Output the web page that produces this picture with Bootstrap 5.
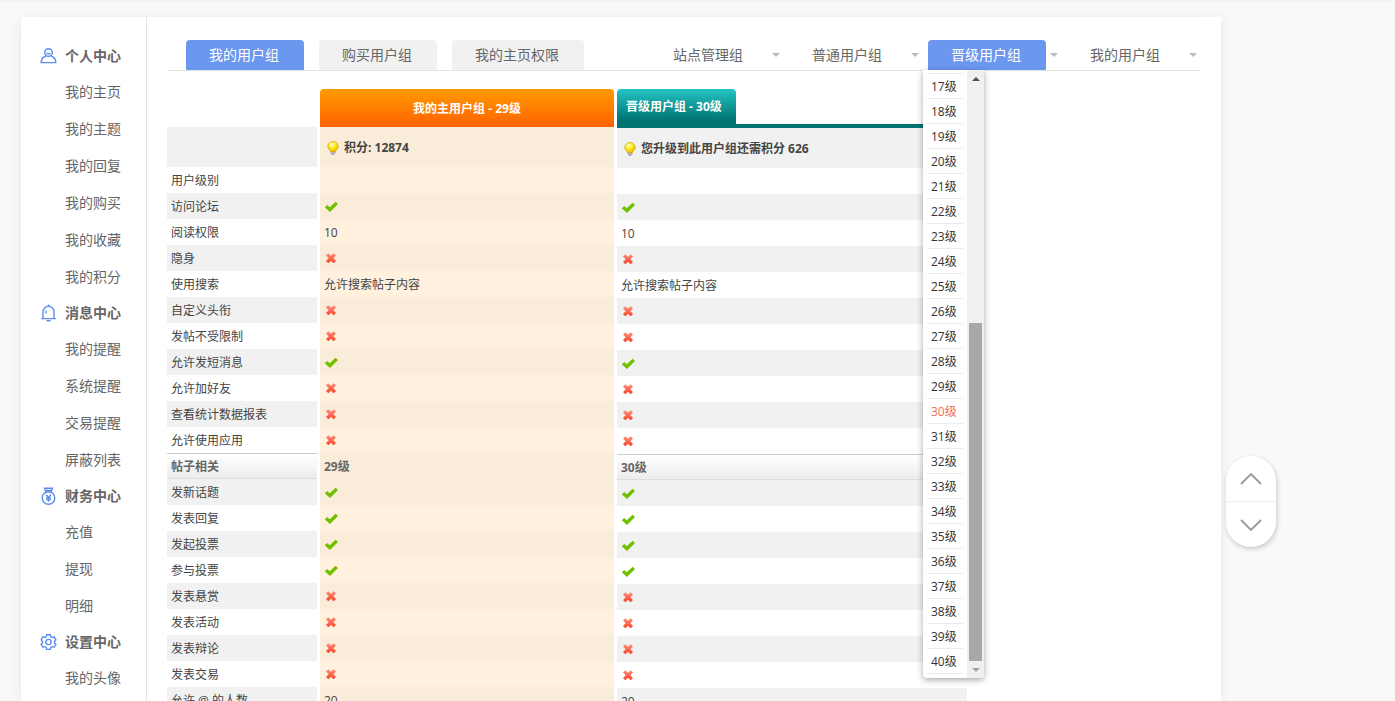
<!DOCTYPE html>
<html lang="zh-CN">
<head>
<meta charset="utf-8">
<meta name="viewport" content="width=device-width, initial-scale=1">
<title>我的用户组</title>
<link href="https://cdn.jsdelivr.net/npm/bootstrap@5.3.0/dist/css/bootstrap.min.css" rel="stylesheet">
<style>
body{font:12px/26px "Open Sans","Noto Sans CJK SC",sans-serif;color:#444;background:linear-gradient(#f2f2f2,#f9f9f9 3px) #f9f9f9}
a{color:inherit;text-decoration:none}
.page{padding:17px 119px 0 21px;gap:5px}
.panel{background:#fff;box-shadow:0 2px 12px rgba(0,0,0,.08);min-width:0}
/* sidebar */
.side{width:126px;flex:none;border-right:1px solid #e3e3e3;padding:21px 0 0 19px;color:#666;font-size:14px}
.side h2{font-size:14px;font-weight:700;line-height:35px;height:35px;margin:0;gap:8px}
.side h2 svg{width:17px;height:18px;flex:none;fill:none;stroke:#5b8def;stroke-width:1.4}
.side li a{display:block;line-height:37px;padding-left:25px}
/* tabs */
.main-col{padding:23px 20px 0;min-width:0}
.tabs{border-bottom:1px solid #e3e3e3;padding-left:19px;font-size:14px;color:#666}
.tab-set{gap:15px}
.group-set{gap:5px}
.tab-link{display:block;height:30px;line-height:30px;padding:0 25px 0 23px;border-radius:4px 4px 0 0;white-space:nowrap}
.tab-set .tab-link{background:#f1f1f1}
.tabs .tab-link.on{background:#6b97ee;color:#fff}
.caret-btn{width:16px;height:30px;border:0;background:none;padding:0;display:flex;align-items:center;justify-content:center}
.caret-btn::before,.arrow::before{content:"";border:4px solid transparent;border-top-color:#bbb;border-bottom:0}
/* level menu */
.levels{top:100%;left:-5px;width:61px;z-index:5;background:#fff;color:#333;font-size:12px;border-radius:0 0 4px 4px;box-shadow:0 2px 6px rgba(0,0,0,.35);overflow:hidden}
.levels ul{width:36px;margin:3px 4px 4px;border-top:1px solid #e5edf2}
.levels li{height:25px;line-height:26px;padding-left:4px;border-bottom:1px solid #e5edf2;white-space:nowrap}
.levels .now{color:#f26c4f}
.scroll-track{width:17px;background:#f0f0f0;padding:0 2px}
.arrow{height:17px;display:flex;align-items:center;justify-content:center}
.arrow::before{border-top-color:#a0a0a0}
.arrow.up::before{border-top:0;border-bottom:4px solid #505050}
.thumb{background:#a8a8a8;height:338px}
/* permission tables */
.sheets{padding-top:18px;gap:3px}
.sheet{border-collapse:separate;border-spacing:0;table-layout:fixed;flex:none}
.sheet td,.sheet tbody th{height:26px;padding:2px 4px 0;line-height:22px;font-weight:400;text-align:left;white-space:nowrap;vertical-align:middle}
.sheet .info td,.sheet .info th{height:40px;font-weight:700}
.sheet .odd>*{background:#f1f1f1}
.sheet .cap>*{font-weight:700;color:#666;line-height:20px;border-top:1px solid #ccc;border-bottom:1px solid #ddd;background:linear-gradient(#fff,#ececec)}
.names{width:150px}.mine{width:294px}.next{width:350px}
.names thead td{height:38px}
.mine thead th{height:38px;padding:2px 0 0;color:#fff;text-align:center;border-radius:4px 4px 0 0;background:linear-gradient(#ff9a00,#ff6200)}
.mine tbody tr>*{background:#fff1de}
.mine .odd>*,.mine .cap>*{background:#f9ecd9}
.mine .cap>*{border:0}
.next thead th{height:39px;padding:0;border-bottom:4px solid #007472;vertical-align:bottom}
.next thead span{display:block;width:119px;height:35px;line-height:35px;padding-left:9px;color:#fff;border-radius:4px 4px 0 0;background:linear-gradient(#24c4c4,#007472 90%);white-space:nowrap}
.mark-ico{width:14px;height:12px;display:block}
.bulb{width:12px;height:14px;margin:0 5px 0 3px;vertical-align:-3px}
/* page jump */
.jump{width:50px;flex:none;margin-bottom:154px;background:#fff;border-radius:25px;box-shadow:1px 2px 5px rgba(0,0,0,.2);overflow:hidden}
.jump button{width:50px;height:45px;border:0;padding:0;background:none;display:flex;align-items:center;justify-content:center}
.jump button+button{border-top:1px solid #eee;height:46px}
.jump svg{width:24px;height:14px;fill:none;stroke:#999;stroke-width:1.8}
</style>
</head>
<body>
<svg class="position-absolute" width="0" height="0" aria-hidden="true">
  <defs>
    <linearGradient id="red" x1="0" y1="0" x2="0" y2="1"><stop stop-color="#ff9080"/><stop offset="1" stop-color="#fb3f20"/></linearGradient>
    <radialGradient id="glow" cx=".4" cy=".3" r=".7"><stop stop-color="#fffde0"/><stop offset=".45" stop-color="#ffee20"/><stop offset="1" stop-color="#f0bc00"/></radialGradient>
  </defs>
</svg>
<div class="page d-flex vh-100 overflow-hidden">
  <div class="panel d-flex flex-grow-1">
    <nav class="side">
      <h2 class="d-flex align-items-center"><svg viewBox="0 0 16 18"><circle cx="8" cy="5.500" r="3.800"/><path d="M6 6q2 1.600 4 0M5.300 9.300C2.500 10 .8 12.500.7 15.600h14.600C15.200 12.500 13.500 10 10.700 9.300"/></svg>个人中心</h2>
      <ul class="list-unstyled mb-0">
        <li><a href="#">我的主页</a></li><li><a href="#">我的主题</a></li><li><a href="#">我的回复</a></li><li><a href="#">我的购买</a></li><li><a href="#">我的收藏</a></li><li><a href="#">我的积分</a></li>
      </ul>
      <h2 class="d-flex align-items-center"><svg viewBox="0 0 16 18"><path d="M2.500 14V8a5.500 5.800 0 0 1 11 0v6M.7 14.600h14.600M8 .5v1.500M6 16.700h4M5.600 6.500v3"/></svg>消息中心</h2>
      <ul class="list-unstyled mb-0">
        <li><a href="#">我的提醒</a></li><li><a href="#">系统提醒</a></li><li><a href="#">交易提醒</a></li><li><a href="#">屏蔽列表</a></li>
      </ul>
      <h2 class="d-flex align-items-center"><svg viewBox="0 0 16 18"><circle cx="8" cy="11" r="6.300"/><path d="M5.500 5 4 1.200h8L10.500 5M5 3.500h6M5.600 7.700 8 10.300l2.400-2.600M5.500 10.800h5M5.500 12.600h5M8 10.300v4.500"/></svg>财务中心</h2>
      <ul class="list-unstyled mb-0">
        <li><a href="#">充值</a></li><li><a href="#">提现</a></li><li><a href="#">明细</a></li>
      </ul>
      <h2 class="d-flex align-items-center"><svg viewBox="0 0 16 18"><path d="M6.200 1.700h3.600l.5 2.100 1.200.7 2.100-.6 1.800 3-1.500 1.600v1.200l1.500 1.600-1.800 3-2.100-.6-1.200.7-.5 2H6.200l-.5-2-1.200-.7-2.100.6-1.800-3 1.500-1.600V8.500L.6 6.900l1.800-3 2.100.6 1.200-.7z"/><circle cx="8" cy="9" r="2.600"/></svg>设置中心</h2>
      <ul class="list-unstyled mb-0"><li><a href="#">我的头像</a></li></ul>
    </nav>
    <main class="main-col flex-grow-1">
      <div class="tabs d-flex justify-content-between">
        <div class="tab-set d-flex">
          <a class="tab-link on" href="#">我的用户组</a><a class="tab-link" href="#">购买用户组</a><a class="tab-link" href="#">我的主页权限</a>
        </div>
        <div class="group-set d-flex">
          <div class="d-flex"><a class="tab-link" href="#">站点管理组</a><button class="caret-btn" aria-label="展开站点管理组"></button></div>
          <div class="d-flex"><a class="tab-link" href="#">普通用户组</a><button class="caret-btn" aria-label="展开普通用户组"></button></div>
          <div class="d-flex position-relative"><a class="tab-link on" href="#">晋级用户组</a><button class="caret-btn" aria-label="展开晋级用户组"></button>
            <div class="levels position-absolute d-flex">
              <ul class="list-unstyled flex-shrink-0" id="levels"></ul>
              <div class="scroll-track d-flex flex-column"><div class="arrow up"></div><div class="thumb mt-auto"></div><div class="arrow"></div></div>
            </div>
          </div>
          <div class="d-flex"><a class="tab-link" href="#">我的用户组</a><button class="caret-btn" aria-label="展开我的用户组"></button></div>
        </div>
      </div>
      <div class="sheets d-flex align-items-start">
        <table class="sheet names"><thead><tr><td></td></tr></thead><tbody></tbody></table>
        <table class="sheet mine"><thead><tr><th>我的主用户组 - 29级</th></tr></thead><tbody></tbody></table>
        <table class="sheet next"><thead><tr><th><span>晋级用户组 - 30级</span></th></tr></thead><tbody></tbody></table>
      </div>
    </main>
  </div>
  <div class="jump align-self-end">
    <button aria-label="向上"><svg viewBox="0 0 24 14"><path d="M2 12 12 2l10 10"/></svg></button>
    <button aria-label="向下"><svg viewBox="0 0 24 14"><path d="M2 2l10 10L22 2"/></svg></button>
  </div>
</div>
<script src="https://cdn.jsdelivr.net/npm/bootstrap@5.3.0/dist/js/bootstrap.bundle.min.js"></script>
<script>
const yes = '<svg class="mark-ico" viewBox="0 0 14 12"><path fill="#72bf00" d="M.8 6.300 3.200 4 5.700 6.200 11.600.8l2.400 2.300L6 11z"/></svg>';
const no = '<svg class="mark-ico" viewBox="0 0 14 12"><path fill="url(#red)" d="M4.300.3 7 2.700 9.700.3 12 2.500 9.300 5.200 12 8 9.700 10.300 7 7.800 4.300 10.300 2 8 4.700 5.200 2 2.500z"/></svg>';
const bulb = '<svg class="bulb" viewBox="0 0 12 14"><path fill="#bbb" stroke="#888" stroke-width=".6" d="M4 9h4v3l-1 1.500H5L4 12z"/><path fill="url(#glow)" stroke="#d9a800" stroke-width=".8" d="M6 .6a5 5 0 0 1 5.200 5C11.200 8 9 8.500 8.500 10.500h-5C3 8.500.8 8 .8 5.600A5 5 0 0 1 6 .6z"/></svg>';
// name, value for level 29, value for level 30, row class
const rows = [
  ['', bulb + '积分: 12874', bulb + '您升级到此用户组还需积分 626', 'info odd'],
  ['用户级别', '', ''], ['访问论坛', yes, yes], ['阅读权限', '10', '10'], ['隐身', no, no],
  ['使用搜索', '允许搜索帖子内容', '允许搜索帖子内容'], ['自定义头衔', no, no], ['发帖不受限制', no, no],
  ['允许发短消息', yes, yes], ['允许加好友', no, no], ['查看统计数据报表', no, no], ['允许使用应用', no, no],
  ['帖子相关', '29级', '30级', 'cap'],
  ['发新话题', yes, yes], ['发表回复', yes, yes], ['发起投票', yes, yes], ['参与投票', yes, yes],
  ['发表悬赏', no, no], ['发表活动', no, no], ['发表辩论', no, no], ['发表交易', no, no],
  ['允许 @ 的人数', '20', '20']
];
document.querySelectorAll('.sheet tbody').forEach((body, col) => {
  const tag = col ? 'td' : 'th';
  body.innerHTML = rows.map((r, i) => {
    const odd = i < 12 ? i % 2 === 0 : i % 2 === 1;
    return `<tr class="${r[3] || (odd ? 'odd' : '')}"><${tag}>${r[col]}</${tag}></tr>`;
  }).join('');
});
let list = '';
for (let n = 17; n <= 40; n++) list += `<li class="${n === 30 ? 'now' : ''}"><a href="#">${n}级</a></li>`;
document.getElementById('levels').innerHTML = list;
</script>
</body>
</html>
